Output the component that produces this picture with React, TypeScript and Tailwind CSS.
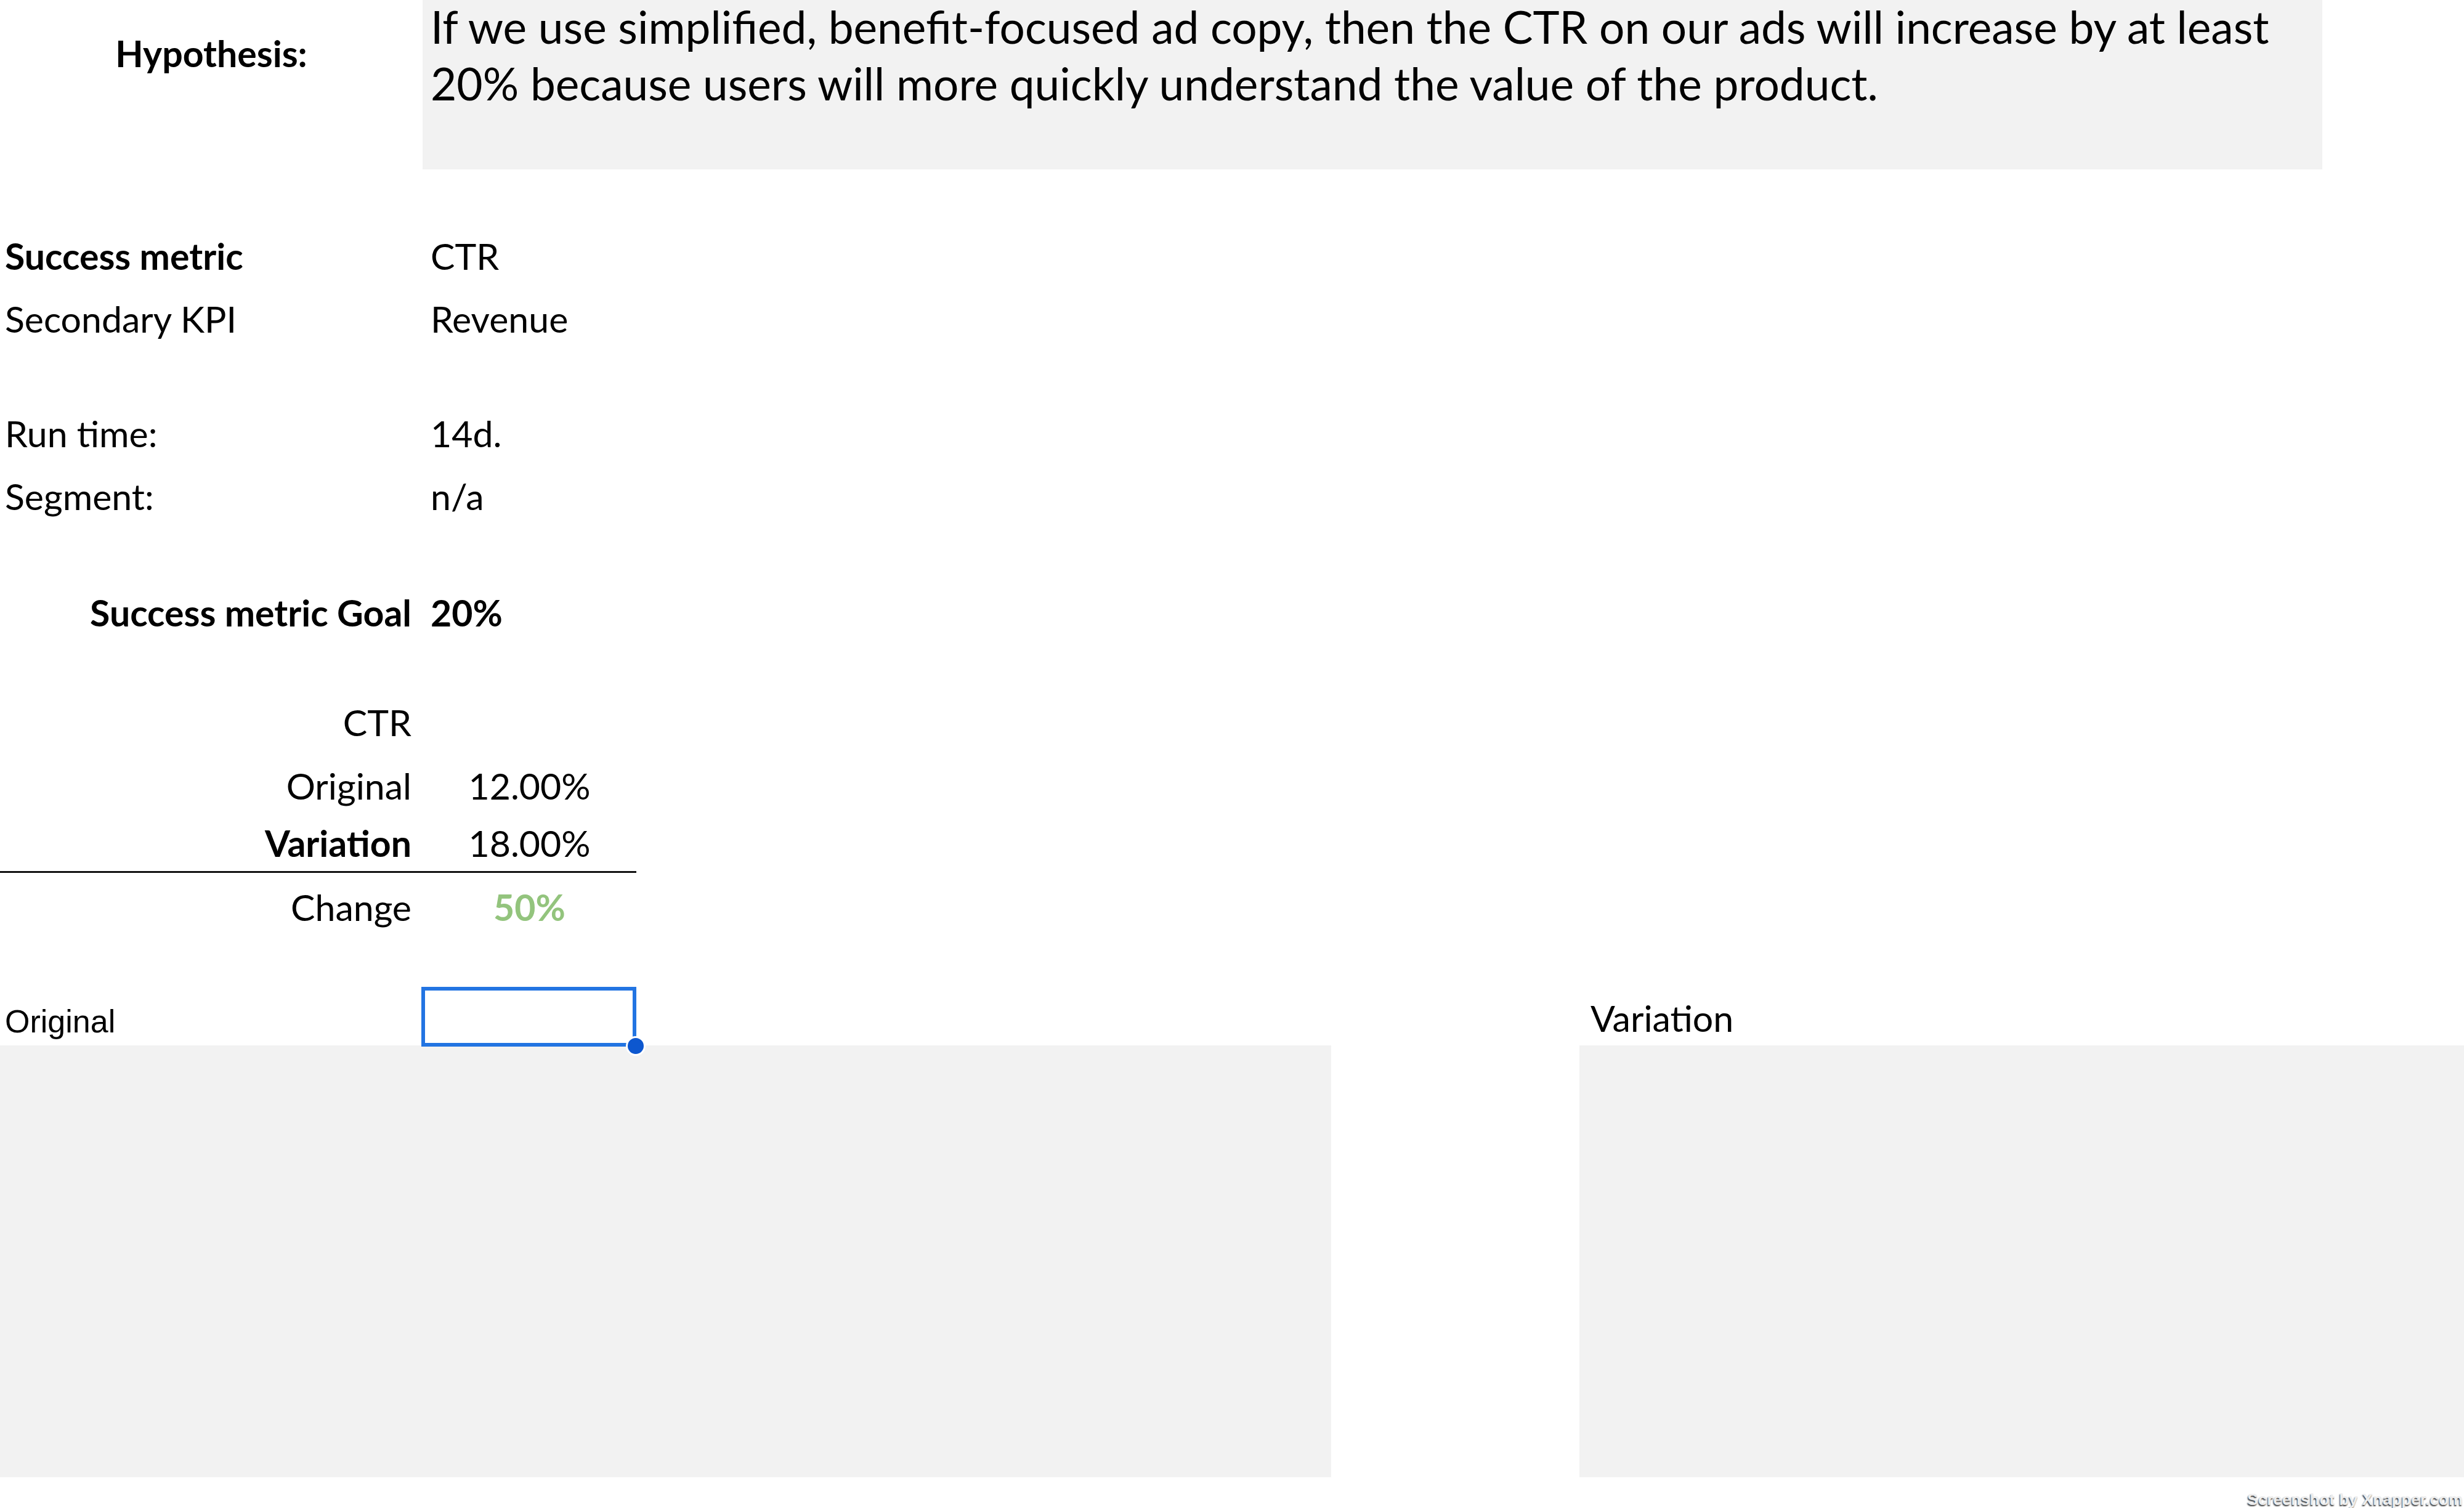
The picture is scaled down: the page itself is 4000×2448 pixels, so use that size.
import React from "react";

type RowProps = {
  label: string;
  value?: string;
  boldLabel?: boolean;
  boldValue?: boolean;
  alignRight?: boolean;
  centerValue?: boolean;
  valueClass?: string;
  rowClass?: string;
};

const Row = ({
  label,
  value,
  boldLabel,
  boldValue,
  alignRight,
  centerValue,
  valueClass = "",
  rowClass = "h-[102px]",
}: RowProps) => {
  return (
    <div className={`flex items-center ${rowClass}`}>
      <div
        className={`w-[686px] ${alignRight ? "text-right pr-[18px]" : "pl-[8px]"} ${
          boldLabel ? "font-bold" : ""
        }`}
      >
        {label}
      </div>
      {value !== undefined ? (
        <div
          className={`${centerValue ? "w-[347px] text-center" : "pl-[13px]"} ${
            boldValue ? "font-bold" : ""
          } ${valueClass}`}
        >
          {value}
        </div>
      ) : null}
    </div>
  );
};

const App = () => {
  return (
    <div className="w-[4000px] h-[2448px] bg-white text-black flex flex-col font-['Lato',sans-serif] text-[59px] leading-[70px] overflow-hidden">
      {/* hypothesis */}
      <div className="flex h-[275px] shrink-0">
        <div className="w-[686px] pt-[52px] text-center font-bold">Hypothesis:</div>
        <div className="w-[3084px] bg-[#f2f2f2] pl-[13px] text-[73px] leading-[92px] whitespace-nowrap">
          <div className="-mt-[3px]">
            If we use simplified, benefit-focused ad copy, then the CTR on our ads will increase by at least
            <br />
            20% because users will more quickly understand the value of the product.
          </div>
        </div>
      </div>

      {/* metrics */}
      <div className="flex flex-col mt-[90px] shrink-0">
        <Row label="Success metric" value="CTR" boldLabel />
        <Row label="Secondary KPI" value="Revenue" />
        <div className="h-[84px]" />
        <Row label="Run time:" value="14d." />
        <Row label="Segment:" value="n/a" />
        <div className="h-[87px]" />
        <Row label="Success metric Goal" value="20%" boldLabel boldValue alignRight />
        <div className="h-[76px]" />
        <Row label="CTR" alignRight />
        <div className="h-[5px]" />
        <Row label="Original" value="12.00%" alignRight centerValue rowClass="h-[94px]" />
        <Row
          label="Variation"
          value="18.00%"
          boldLabel
          alignRight
          centerValue
          rowClass="h-[94px] w-[1033px] border-b-[3px] border-[#111]"
        />
        <Row
          label="Change"
          value="50%"
          alignRight
          centerValue
          boldValue
          valueClass="text-[#93c47d]"
          rowClass="h-[112px]"
        />
      </div>

      {/* screenshots */}
      <div className="flex shrink-0">
        <div className="w-[2161px] flex flex-col">
          <div className="h-[168px] flex items-end">
            <div className="w-[684px] pl-[8px] mb-[13px] font-['Liberation_Sans',Arial,sans-serif] text-[52px] leading-[52px]">
              Original
            </div>
            <div className="relative z-10 w-[349px] h-[97px] -mb-[2px] border-[6px] border-[#2274e2] bg-white">
              <div className="absolute -right-[21px] -bottom-[21px] w-[32px] h-[32px] rounded-full bg-[#0d57cf] border-[3px] border-white" />
            </div>
          </div>
          <div className="h-[701px] bg-[#f2f2f2]" />
        </div>
        <div className="w-[403px]" />
        <div className="flex-1 flex flex-col">
          <div className="h-[168px] flex items-end pl-[18px]">
            <div className="mb-[9px]">Variation</div>
          </div>
          <div className="h-[701px] bg-[#f2f2f2]" />
        </div>
      </div>

      <div className="flex justify-end mt-[22px] pr-[2px]">
        <span className="font-['Liberation_Sans',Arial,sans-serif] font-bold text-[26px] leading-[28px] text-[#eeeeee] [text-shadow:-1px_2px_2px_#3a3a3a]">
          Screenshot by Xnapper.com
        </span>
      </div>
    </div>
  );
};

export default App;
